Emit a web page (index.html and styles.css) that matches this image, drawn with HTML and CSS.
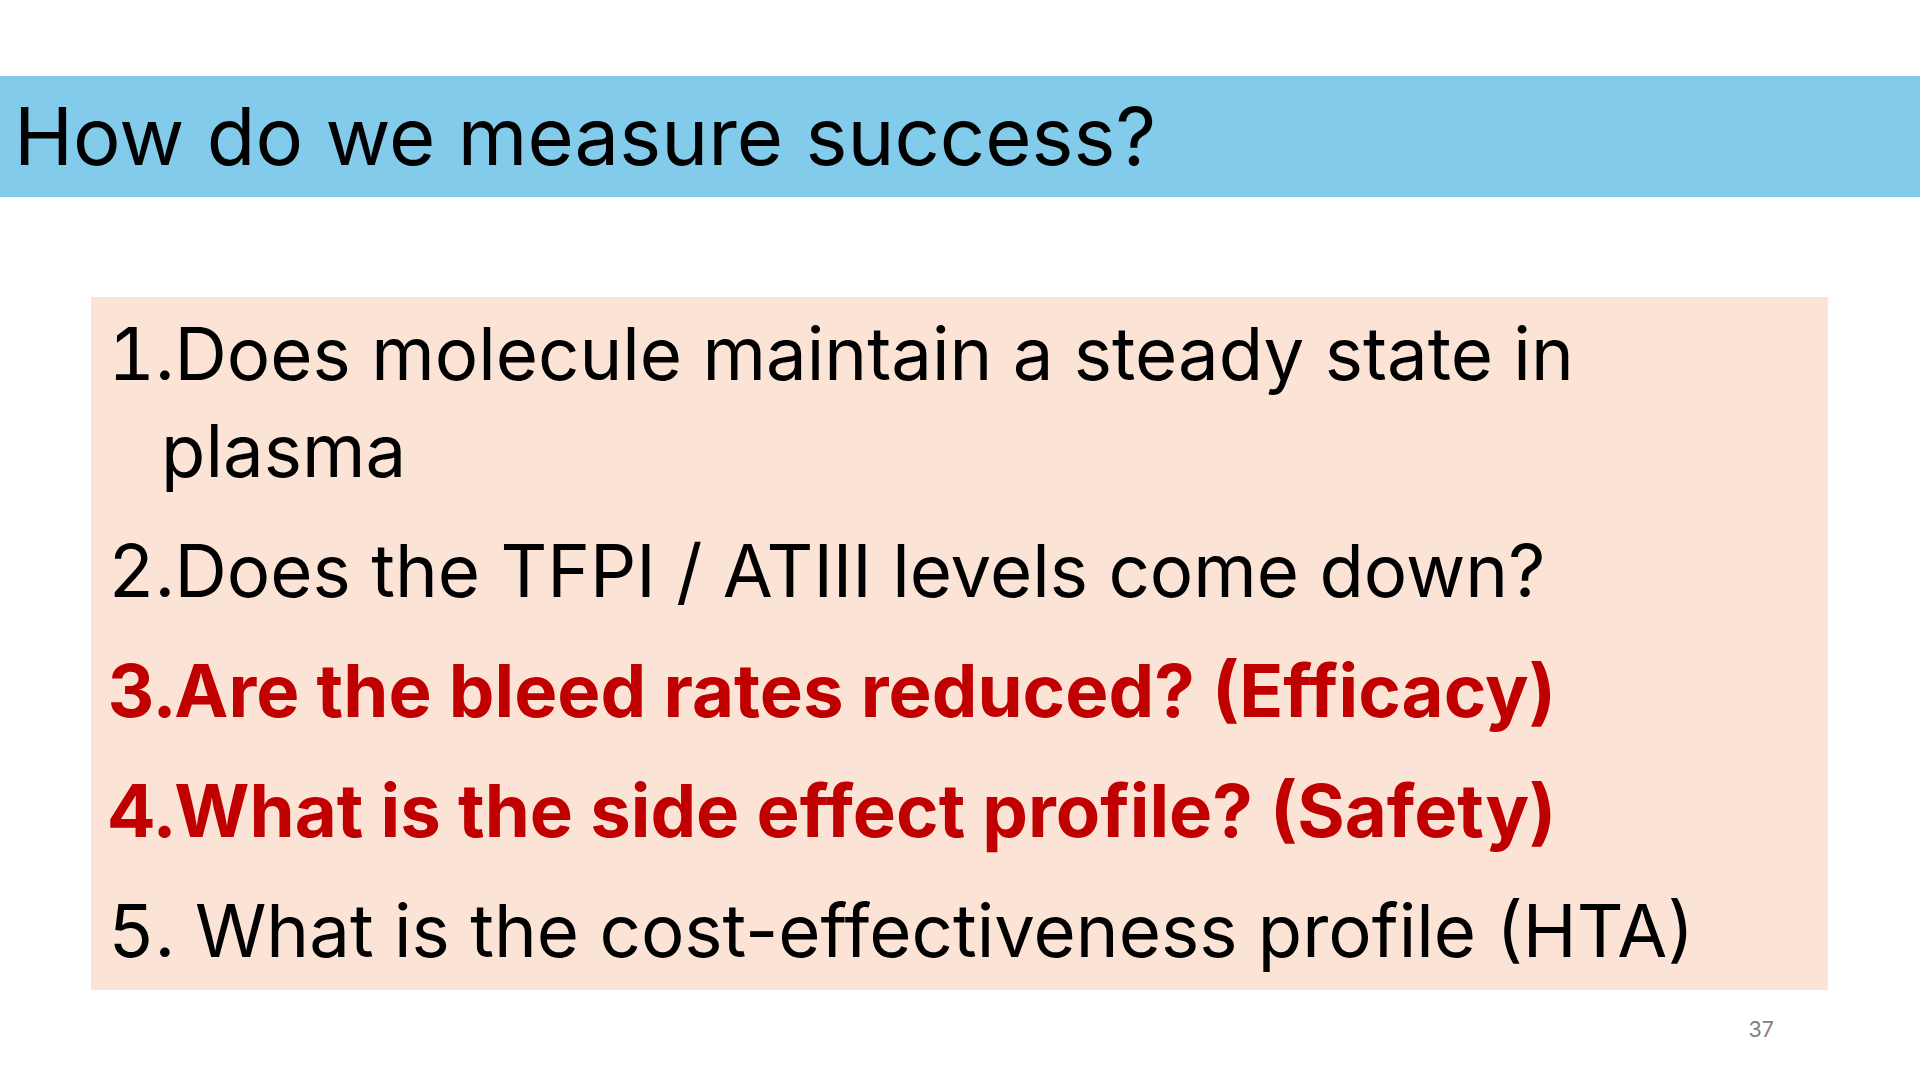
FILE: index.html
```html
<!DOCTYPE html>
<html lang="en">
<head>
<meta charset="utf-8">
<title>How do we measure success?</title>
<link rel="stylesheet" href="styles.css">
</head>
<body>
<div class="slide">
  <header class="title-band">
    <h1 class="title">How do we measure success?</h1>
  </header>
  <section class="content-box">
    <p class="item"><span class="num">1.</span><span>Does molecule maintain a steady state in </span>plasma</p>
    <p class="item"><span class="num">2.</span>Does the TFPI / ATIII levels come down?</p>
    <p class="item item-key"><span class="num">3.</span>Are the bleed rates reduced? (Efficacy)</p>
    <p class="item item-key"><span class="num">4.</span>What is the side effect profile? (Safety)</p>
    <p class="item"><span class="num">5.</span> What is the cost-effectiveness profile (HTA)</p>
  </section>
  <footer class="slide-footer">
    <span class="page-number">37</span>
  </footer>
</div>
</body>
</html>
```

FILE: styles.css
```css
html, body {
  margin: 0;
  padding: 0;
  background: #ffffff;
}

.slide {
  width: 1920px;
  height: 1080px;
  overflow: hidden;
  background: #ffffff;
  font-family: "Inter", "Roboto", "Liberation Sans", sans-serif;
  color: #000000;
  display: flex;
  flex-direction: column;
}

.title-band {
  margin-top: 76px;
  height: 121px;
  background: #83cbeb;
  padding-left: 14px;
}

.title {
  margin: 0;
  font-size: 79.5px;
  font-weight: 400;
  line-height: 121px;
  white-space: nowrap;
}

.content-box {
  margin-top: 100px;
  margin-left: 91px;
  width: 1737px;
  box-sizing: border-box;
  background: #fbe3d6;
  padding: 8px 40px 11px 17px;
}

.item {
  margin: 23px 0 0 0;
  font-size: 72.5px;
  line-height: 97px;
  padding-left: 53px;
  text-indent: -53px;
}

.item:first-child {
  margin-top: 0;
}

.num {
  font-feature-settings: "tnum" 1;
}

.item-key {
  font-weight: 700;
  color: #c00000;
}

.slide-footer {
  margin-top: 27px;
  display: flex;
  justify-content: flex-end;
  padding-right: 146px;
}

.page-number {
  font-size: 21.5px;
  line-height: 24px;
  color: #808080;
}
```
